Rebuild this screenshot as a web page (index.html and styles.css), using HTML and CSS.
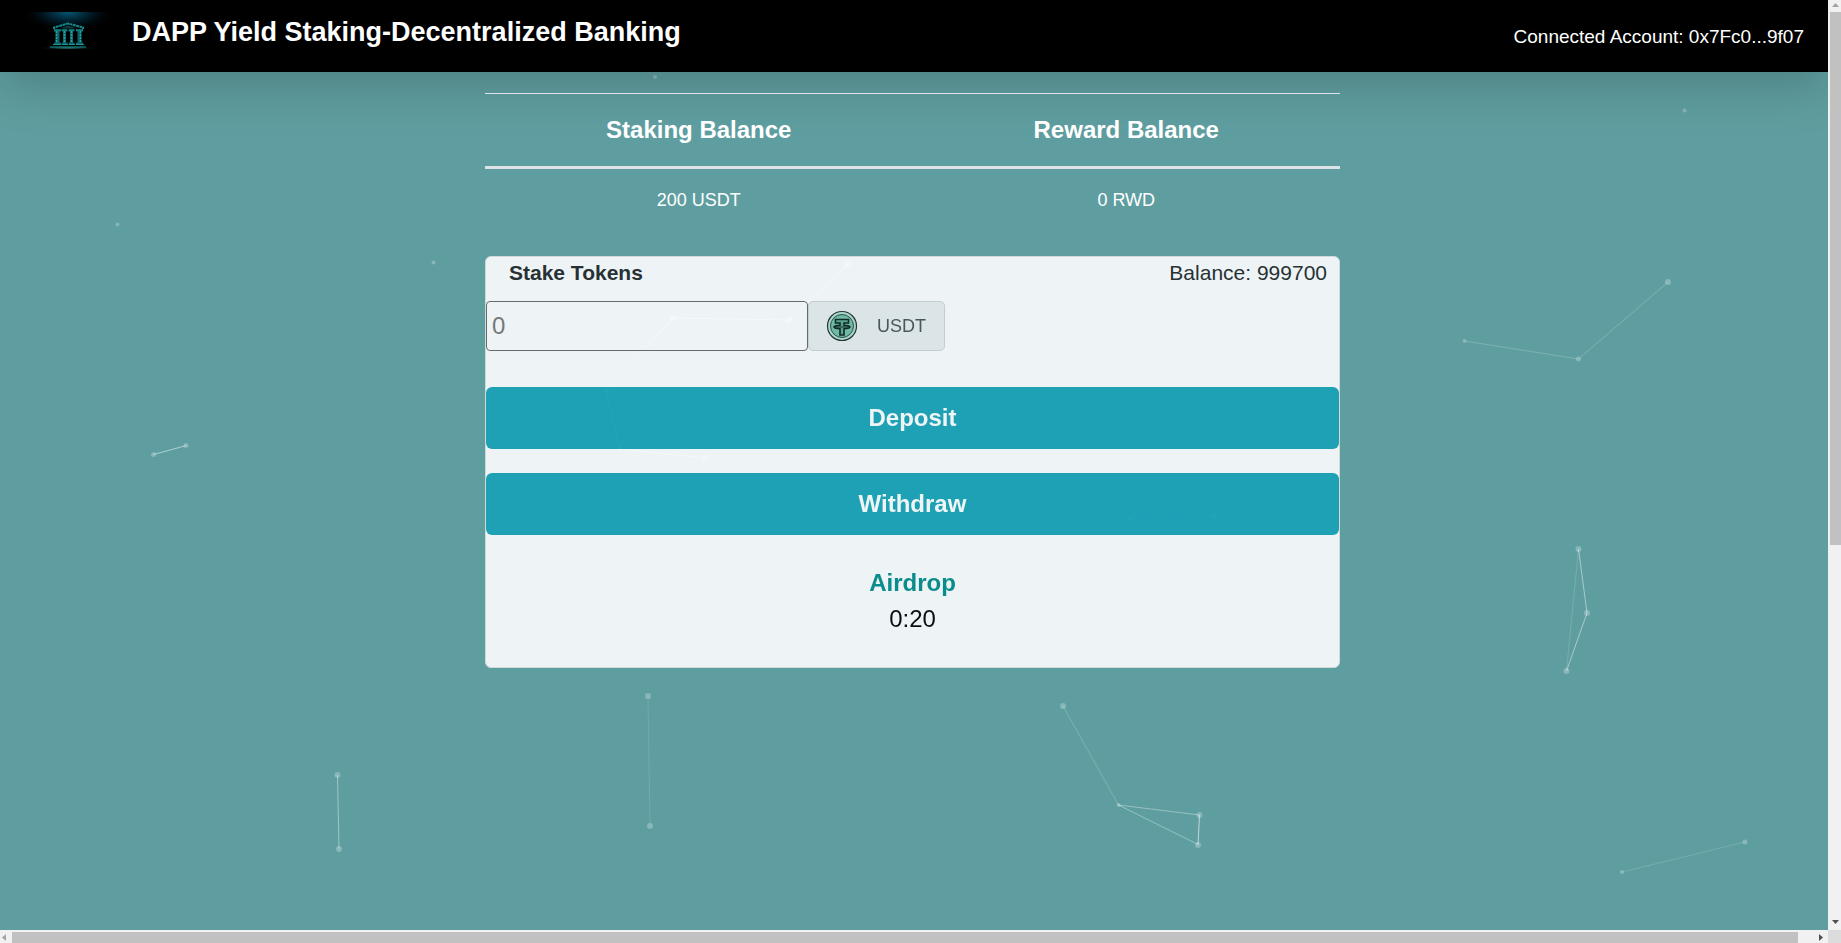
FILE: index.html
```html
<!DOCTYPE html>
<html lang="en">
<head>
<meta charset="utf-8">
<title>DAPP Yield Staking</title>
<link rel="stylesheet" href="styles.css">
</head>
<body>
<div class="frame">
  <div class="page">
    <svg class="particles" viewBox="0 0 1828 930" preserveAspectRatio="xMidYMin slice" aria-hidden="true">
      <g class="links">
        <path opacity=".5" d="M153.500 454.500L186.500 445.500"/>
        <path opacity=".2" d="M1464.500 341L1578.500 359L1668 282"/>
        <path opacity=".45" d="M1578.500 549L1587 613L1566.500 671"/>
        <path opacity=".15" d="M1578.500 549L1566.500 671"/>
        <path opacity=".2" d="M1063 706L1118.500 805"/>
        <path opacity=".35" d="M1198 844.500L1118.500 805L1199.500 815"/>
        <path opacity=".6" d="M1199.500 815L1198 845"/>
        <path opacity=".15" d="M1622 872L1745 842"/>
        <path opacity=".4" d="M337.500 775L339 849"/>
        <path opacity=".12" d="M648 696L650 826"/>
        <path opacity=".4" d="M848 264L789 320L673 318L606 391"/>
        <path opacity=".3" d="M606 391L620 449L705 458"/>
        <path opacity=".15" d="M620 449L673 318L705 458M1129 519L1215 516"/>
      </g>
      <g class="dots">
        <circle cx="655" cy="77" r="2"/><circle cx="1684.500" cy="110.500" r="2"/>
        <circle cx="117.500" cy="224.500" r="2"/><circle cx="433.500" cy="262.500" r="2"/>
        <circle cx="153.500" cy="454.500" r="2.500"/><circle cx="186" cy="445.500" r="2.500"/>
        <circle cx="1464.500" cy="341" r="2"/><circle cx="1578.500" cy="359" r="2.500"/><circle cx="1668" cy="282" r="3"/>
        <circle cx="1578.500" cy="549" r="3"/><circle cx="1587" cy="613" r="3"/><circle cx="1566.500" cy="671" r="3"/>
        <circle cx="1063" cy="706" r="3"/><circle cx="1118.500" cy="805" r="2"/><circle cx="1199.500" cy="815" r="3"/><circle cx="1198" cy="845" r="3"/>
        <circle cx="1622" cy="872" r="2"/><circle cx="1745" cy="842" r="2.500"/>
        <circle cx="337.500" cy="775" r="3"/><circle cx="339" cy="849" r="3"/>
        <circle cx="648" cy="696" r="3"/><circle cx="650" cy="826" r="3"/>
        <circle cx="848" cy="264" r="3"/><circle cx="789" cy="320" r="3"/><circle cx="673" cy="318" r="3"/>
        <circle cx="606" cy="391" r="2"/><circle cx="620" cy="449" r="2"/><circle cx="705" cy="458" r="3"/>
        <circle cx="1129" cy="519" r="2"/><circle cx="1215" cy="516" r="2"/>
      </g>
    </svg>

    <header class="navbar">
      <svg class="logo" viewBox="0 0 96 38" aria-hidden="true">
        <defs>
          <radialGradient id="sky" gradientUnits="userSpaceOnUse" cx="0" cy="0" r="1" gradientTransform="translate(48 0) scale(46 20)">
            <stop offset="0" stop-color="#045a75"/><stop offset=".5" stop-color="#02283a" stop-opacity=".7"/><stop offset="1" stop-color="#000" stop-opacity="0"/>
          </radialGradient>
          <radialGradient id="floor" gradientUnits="userSpaceOnUse" cx="0" cy="0" r="1" gradientTransform="translate(48 36) scale(30 2)">
            <stop offset="0" stop-color="#2d8f8c"/><stop offset="1" stop-color="#000" stop-opacity="0"/>
          </radialGradient>
        </defs>
        <rect width="96" height="22" fill="url(#sky)"/>
        <rect y="33" width="96" height="4" fill="url(#floor)"/>
        <path d="M34 17V15.500L48 11.500L63 15.500V17" fill="none" stroke="#15888b" stroke-width="2" stroke-dasharray="3 .5"/>
        <path d="M40 16.500L48 13.500L57 16.500Z" fill="#083c40"/>
        <g fill="#0d6468">
          <path d="M34 17.500h7v2h-1.500v11H41v2h-7v-2h1.500v-11H34z"/>
          <path d="M41.500 17.500h6v2H46v11h1.500v2h-6v-2H43v-11h-1.500z"/>
          <path d="M48.500 17.500h6v2H53v11h1.500v2h-6v-2H50v-11h-1.500z"/>
          <path d="M56 17.500h7v2h-1.500v11H63v2h-7v-2h1.500v-11H56z"/>
        </g>
        <path d="M36.500 19v12M44.500 19v12M51.500 19v12M60.500 19v12" stroke="#20a5a4" stroke-width="1.500" stroke-dasharray="2 1"/>
        <path d="M34 18h7M42 18h5M49 18h5M56 18h7M33 32.500h8M42 32.500h6M49 32.500h6M56 32.500h8M30 35h36" stroke="#1a9a9a"/>
      </svg>
      <h1 class="brand">DAPP Yield Staking-Decentralized Banking</h1>
      <p class="account">Connected Account: 0x7Fc0...9f07</p>
    </header>

    <main class="content">
      <table class="balances">
        <thead><tr><th scope="col">Staking Balance</th><th scope="col">Reward Balance</th></tr></thead>
        <tbody><tr><td>200 USDT</td><td>0 RWD</td></tr></tbody>
      </table>

      <form class="card">
        <div class="card-head">
          <label class="stake-label" for="amount">Stake Tokens</label>
          <span>Balance: 999700</span>
        </div>
        <div class="input-group">
          <input class="amount" id="amount" type="text" placeholder="0">
          <div class="unit">
            <svg class="coin" viewBox="0 0 32 32" aria-hidden="true">
              <circle cx="16" cy="16" r="14.500" fill="#b4ddd0" stroke="#1c2b2b" stroke-width="1.200"/>
              <circle cx="16" cy="16" r="11.500" fill="#6fbfa6" stroke="#27423d" stroke-width="1"/>
              <path d="M9.500 9.500h13v3.500h-4.500v2.300c3.500.2 6 .8 6 1.700s-2.500 1.500-6 1.700v6.300h-4v-6.300c-3.500-.2-6-.8-6-1.700s2.500-1.500 6-1.700v-2.300H9.500z" fill="#5aa890" stroke="#0b1c1a" stroke-width="1.600"/>
              <path d="M8.500 17h15" stroke="#0b1c1a" stroke-width="1"/>
            </svg>
            <span>USDT</span>
          </div>
        </div>
        <div class="actions">
          <button class="btn" type="button">Deposit</button>
          <button class="btn" type="button">Withdraw</button>
        </div>
        <div class="airdrop">
          <h2 class="airdrop-title">Airdrop</h2>
          <div>0:20</div>
        </div>
      </form>
    </main>
  </div>

  <div class="bar bar-y" aria-hidden="true">
    <svg class="arrow" viewBox="0 0 11 12"><path d="M2 7h7L5.500 3z" fill="#a3a3a3"/></svg>
    <div class="track-y"><div class="thumb-y"></div></div>
    <svg class="arrow" viewBox="0 0 11 12"><path d="M2 2h7L5.500 6z" fill="#505050"/></svg>
  </div>
  <div class="bar bar-x" aria-hidden="true">
    <svg class="arrow" viewBox="0 0 12 11"><path d="M6 2v7L2 5.500z" fill="#a3a3a3"/></svg>
    <div class="track-x"><div class="thumb-x"></div></div>
    <svg class="arrow" viewBox="0 0 12 11"><path d="M3 2v7L7 5.500z" fill="#505050"/></svg>
  </div>
  <div class="corner"></div>
</div>
</body>
</html>
```
FILE: styles.css
```css
* { box-sizing: border-box; }

body {
  margin: 0;
  font-family: "Liberation Sans", Arial, sans-serif;
  font-size: 18px;
  color: #212529;
}

h1, h2, p { margin: 0; }

.frame {
  display: grid;
  grid-template-columns: minmax(0, 1fr) 13px;
  grid-template-rows: minmax(0, 1fr) 13px;
  height: 100vh;
}

.page {
  position: relative;
  overflow: hidden;
  background: #5f9ea0;
}

.particles {
  position: absolute;
  inset: 0;
  width: 100%;
  height: 100%;
}

.links { fill: none; stroke: #fff; stroke-width: 1; }
.dots { fill: #fff; opacity: .25; }

.navbar {
  position: relative;
  display: flex;
  align-items: flex-start;
  height: 72px;
  padding: 12px 24px 0 20px;
  background: #000;
  color: #fff;
  box-shadow: 0 16px 48px rgba(0, 0, 0, .175);
}

.logo { width: 96px; height: 38px; }

.brand {
  margin-left: 16px;
  font-size: 27px;
  line-height: 40px;
}

.account {
  margin-left: auto;
  font-size: 19px;
  line-height: 50px;
}

.content {
  position: relative;
  width: 858px;
  max-width: 100%;
  margin: 21px auto 0;
  padding-right: 3px;
}

.balances {
  width: 100%;
  table-layout: fixed;
  border-collapse: separate;
  border-spacing: 0;
  color: #fff;
  text-align: center;
}

.balances th {
  padding: 18px 12px;
  border-top: 1px solid #dee2e6;
  border-bottom: 3px solid #dee2e6;
  font-size: 24px;
  line-height: 36px;
}

.balances td {
  padding: 18px 12px;
  line-height: 26px;
}

.card {
  margin-top: 25px;
  border: 1px solid #dfdfdf;
  border-radius: 6px;
  background: #fefeff;
  opacity: .9;
}

.card-head {
  display: flex;
  justify-content: space-between;
  padding: 0 12px 0 23px;
  font-size: 21px;
  line-height: 32px;
}

.stake-label { font-weight: bold; }

.input-group {
  display: flex;
  margin-top: 12px;
}

.amount {
  width: 322px;
  height: 50px;
  padding: 0 5px;
  border: 1px solid #666;
  border-radius: 4px;
  background: transparent;
  font: 24px "Liberation Sans", Arial, sans-serif;
}

.amount::placeholder { color: #757575; }

.unit {
  display: flex;
  align-items: center;
  gap: 19px;
  width: 137px;
  padding-left: 17px;
  border: 1px solid #ced4da;
  border-radius: 5px;
  background: #e9ecef;
  color: #495057;
}

.coin { width: 32px; height: 32px; }

.actions {
  display: grid;
  gap: 24px;
  margin-top: 36px;
}

.btn {
  height: 62px;
  border: 0;
  border-radius: 6px;
  background: #17a2b8;
  color: #fff;
  font: bold 24px "Liberation Sans", Arial, sans-serif;
}

.airdrop {
  padding: 30px 0;
  font-size: 24px;
  line-height: 36px;
  text-align: center;
  color: #000;
}

.airdrop-title { font-size: 24px; color: #008b8b; }

.bar { display: flex; background: #f1f1f1; }
.bar-y { flex-direction: column; padding-left: 2px; }
.bar-x { padding-top: 2px; }
.arrow { flex: none; width: 12px; height: 12px; }
.bar-y .arrow { width: 11px; }
.bar-x .arrow { height: 11px; }
.track-y, .track-x { flex: 1; }
.thumb-y { height: 58.8%; background: #c1c1c1; }
.track-x { padding-right: 18px; }
.thumb-x { height: 100%; background: #c1c1c1; }
.corner { background: #dcdcdc; }
```
